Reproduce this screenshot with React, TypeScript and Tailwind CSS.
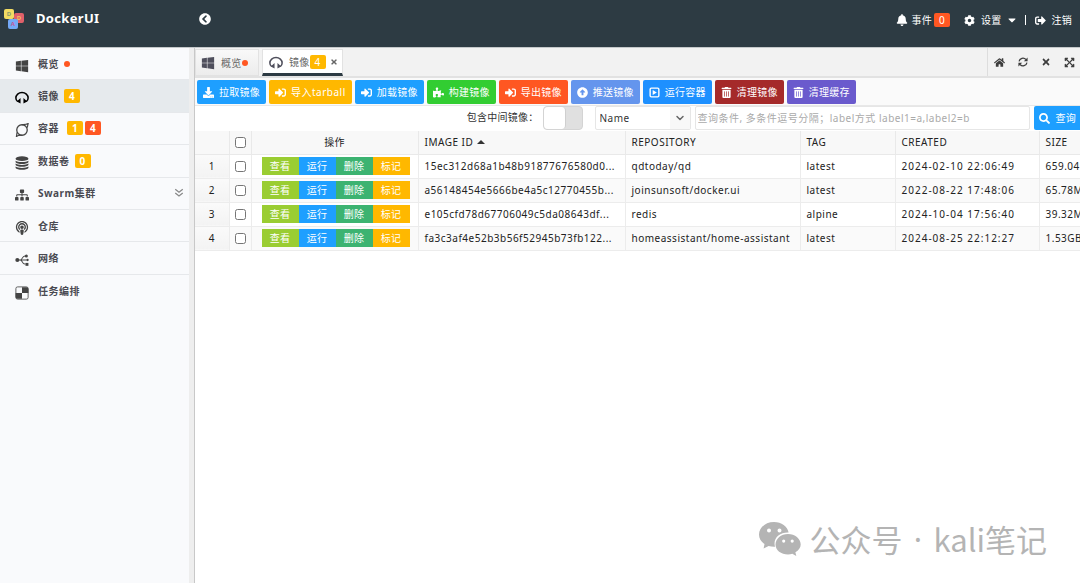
import React from 'react';
import {
  FaArrowAltCircleUp,
  FaBell,
  FaCaretDown,
  FaChevronCircleLeft,
  FaCog,
  FaDownload,
  FaExpandArrowsAlt,
  FaHome,
  FaPodcast,
  FaPuzzlePiece,
  FaSearch,
  FaSignInAlt,
  FaSignOutAlt,
  FaSitemap,
  FaTimes,
  FaTrashAlt,
  FaWindows,
} from 'react-icons/fa';
import { FiChevronDown } from 'react-icons/fi';
import { clsx } from 'clsx';

type IconProps = { className?: string };

const HeadphoneIcon = ({ className }: IconProps) => (
  <svg viewBox="0 0 24 24" className={className} fill="none" stroke="currentColor">
    <path d="M4.500 18C2.500 16.500 1.500 14.500 1.500 12a10.500 9.500 0 0 1 21 0c0 2.500-1 4.500-3 6" strokeWidth="2.600" />
    <path d="M9.500 12v9.500L3 18zM14.500 12v9.500L21 18z" fill="currentColor" stroke="none" />
  </svg>
);

const ContainerIcon = ({ className }: IconProps) => (
  <svg viewBox="0 0 24 24" className={className} fill="none" stroke="currentColor" strokeWidth="2.200">
    <ellipse cx="12" cy="12" rx="9" ry="9" />
    <path d="M12 3c3-.2 7 .2 10.500-2l-1.500 7M12 21c-3 .2-6-.2-9.500 2l1-7" strokeWidth="2" />
  </svg>
);

const DatabaseIcon = ({ className }: IconProps) => (
  <svg viewBox="0 0 24 24" className={className} fill="currentColor">
    <ellipse cx="12" cy="4.500" rx="11" ry="4" />
    <path d="M1 8c3 3.200 19 3.200 22 0v2.500c-2 4-20 4-22 0zM1 13c3 3.200 19 3.200 22 0v2.500c-2 4-20 4-22 0zM1 18c3 3.200 19 3.200 22 0v2.500c-2 4-20 4-22 0z" />
  </svg>
);

const NetworkIcon = ({ className }: IconProps) => (
  <svg viewBox="0 0 24 24" className={className} fill="none" stroke="currentColor" strokeWidth="1.800">
    <circle cx="4" cy="12" r="3.500" fill="currentColor" stroke="none" />
    <path d="M4 12h16M9 12c4 0 3-7 8-7h1M9 12c4 0 3 7 8 7h1" />
    <circle cx="19.500" cy="5" r="2.600" fill="currentColor" stroke="none" />
    <circle cx="21.500" cy="12" r="2" fill="currentColor" stroke="none" />
    <rect x="18" y="17" width="5" height="5" fill="currentColor" stroke="none" />
  </svg>
);

const BoardIcon = ({ className }: IconProps) => (
  <svg viewBox="0 0 24 24" className={className} fill="none" stroke="currentColor">
    <rect x="1.500" y="1.500" width="21" height="21" rx="3" strokeWidth="1.400" />
    <path d="M12 2h8a3 3 0 0 1 3 3v7H12zM1 12h11v10H4a3 3 0 0 1-3-3z" fill="currentColor" stroke="none" />
  </svg>
);

const RefreshIcon = ({ className }: IconProps) => (
  <svg viewBox="0 0 24 24" className={className} fill="none" stroke="currentColor" strokeWidth="3">
    <path d="M2.500 10.500A9.500 9.500 0 0 1 19 6M21.500 13.500A9.500 9.500 0 0 1 5 18" />
    <path d="M23 1v9h-9zM1 23v-9h9z" fill="currentColor" stroke="none" />
  </svg>
);

const PlayBoxIcon = ({ className }: IconProps) => (
  <svg viewBox="0 0 24 24" className={className} fill="none" stroke="currentColor">
    <rect x="2.500" y="2.500" width="19" height="19" rx="2.500" strokeWidth="3" />
    <path d="M8 6.500v11l9-5.500z" fill="currentColor" stroke="none" />
  </svg>
);

const DoubleChevronIcon = ({ className }: IconProps) => (
  <svg viewBox="0 0 24 24" className={className} fill="none" stroke="currentColor" strokeWidth="3">
    <path d="M3 3l9 7 9-7M3 12l9 7 9-7" />
  </svg>
);

const WechatIcon = ({ className }: IconProps) => (
  <svg viewBox="0 0 42 34" className={className} fill="currentColor">
    <path
      fillRule="evenodd"
      d="M15 0C6.500 0 0 5.600 0 12.500c0 4 2.100 7.300 5.500 9.600L4.600 26.500l5-2.600c2 .6 4 .9 6.400.8-2.400-8.700 5-14.700 13.600-14.200C28.500 4.500 22.500 0 15 0zM10 6.500a2 2 0 1 1 0 4 2 2 0 0 1 0-4zM20.500 6.500a2 2 0 1 1 0 4 2 2 0 0 1 0-4z"
    />
    <path
      fillRule="evenodd"
      d="M29 12c-7 0-12.500 4.700-12.500 10.500S22 32.500 29 32.500c1.500 0 3-.2 4.300-.7l4 2.200-.9-3.700c3.300-1.900 5.300-4.700 5.300-7.800C41.700 16.700 36 12 29 12zM24.700 17.500a1.600 1.600 0 1 1 0 3.200 1.600 1.600 0 0 1 0-3.200zM33.200 17.500a1.600 1.600 0 1 1 0 3.200 1.600 1.600 0 0 1 0-3.200z"
    />
  </svg>
);

const Logo = () => (
  <div className="relative h-6 w-5 text-[6px] leading-none font-bold" aria-hidden="true">
    <span className="absolute top-1 left-2.5 flex size-2.5 items-center justify-center rounded-xs bg-[#e0606a] text-[#f6c15a]">D</span>
    <span className="absolute top-0 left-0 flex size-2.5 items-center justify-center rounded-xs bg-[#f3dc62] text-[#8a9a6a]">D</span>
    <span className="absolute top-2.5 left-1 flex size-2.5 items-center justify-center rounded-xs bg-[#74a9f7] text-[#c05a9a]">A</span>
  </div>
);

const Badge = ({ value, color }: { value: number; color: string }) => (
  <span className={clsx('flex h-[14px] w-4 items-center justify-center rounded-xs text-[10px] text-white', color)}>{value}</span>
);

interface MenuItem {
  label: string;
  icon: React.ComponentType<IconProps>;
  active?: boolean;
  dot?: boolean;
  expandable?: boolean;
  badges?: { value: number; color: string }[];
}

const MENU: MenuItem[] = [
  { label: '概览', icon: FaWindows, dot: true },
  { label: '镜像', icon: HeadphoneIcon, active: true, badges: [{ value: 4, color: 'bg-[#ffb800]' }] },
  {
    label: '容器',
    icon: ContainerIcon,
    badges: [
      { value: 1, color: 'bg-[#ffb800]' },
      { value: 4, color: 'bg-[#ff5722]' },
    ],
  },
  { label: '数据卷', icon: DatabaseIcon, badges: [{ value: 0, color: 'bg-[#ffb800]' }] },
  { label: 'Swarm集群', icon: FaSitemap, expandable: true },
  { label: '仓库', icon: FaPodcast },
  { label: '网络', icon: NetworkIcon },
  { label: '任务编排', icon: BoardIcon },
];

const TOOLS = [
  { label: '拉取镜像', icon: FaDownload, color: 'bg-[#1e9fff]' },
  { label: '导入tarball', icon: FaSignInAlt, color: 'bg-[#ffb800] tracking-wider' },
  { label: '加载镜像', icon: FaSignInAlt, color: 'bg-[#1e9fff]' },
  { label: '构建镜像', icon: FaPuzzlePiece, color: 'bg-[#32cd32]' },
  { label: '导出镜像', icon: FaSignInAlt, color: 'bg-[#ff5722]' },
  { label: '推送镜像', icon: FaArrowAltCircleUp, color: 'bg-[#6495ed]' },
  { label: '运行容器', icon: PlayBoxIcon, color: 'bg-[#1e90ff]' },
  { label: '清理镜像', icon: FaTrashAlt, color: 'bg-[#a52a2a]' },
  { label: '清理缓存', icon: FaTrashAlt, color: 'bg-[#6a5acd]' },
];

const ACTIONS = [
  { label: '查看', color: 'bg-[#9acd32]' },
  { label: '运行', color: 'bg-[#1e9fff]' },
  { label: '删除', color: 'bg-[#3cb371]' },
  { label: '标记', color: 'bg-[#ffb800]' },
];

const IMAGES = [
  { id: '15ec312d68a1b48b91877676580d0...', repo: 'qdtoday/qd', tag: 'latest', created: '2024-02-10 22:06:49', size: '659.04MB' },
  { id: 'a56148454e5666be4a5c12770455b...', repo: 'joinsunsoft/docker.ui', tag: 'latest', created: '2022-08-22 17:48:06', size: '65.78MB' },
  { id: 'e105cfd78d67706049c5da08643df...', repo: 'redis', tag: 'alpine', created: '2024-10-04 17:56:40', size: '39.32MB' },
  { id: 'fa3c3af4e52b3b56f52945b73fb122...', repo: 'homeassistant/home-assistant', tag: 'latest', created: '2024-08-25 22:12:27', size: '1.53GB' },
];

const Header = () => (
  <header className="flex h-12 items-start justify-between border-b border-[#c4c8ca] bg-[#2d3b43] text-white">
    <div className="flex items-start pt-[9px] pl-1">
      <Logo />
      <h1 className="ml-3 w-[163px] text-[13px] leading-[18px] font-bold tracking-wide">DockerUI</h1>
      <button type="button" aria-label="收起菜单" className="mt-1">
        <FaChevronCircleLeft className="size-3" />
      </button>
    </div>
    <nav className="flex h-10 items-center pr-2">
      <button type="button" className="flex items-center">
        <FaBell className="mr-1 size-3" />
        事件
        <span className="ml-0.5">
          <Badge value={0} color="bg-[#ff5722]" />
        </span>
      </button>
      <button type="button" className="ml-[14px] flex items-center">
        <FaCog className="mr-1.5 size-[11px]" />
        设置
        <FaCaretDown className="ml-1 size-3" />
      </button>
      <span className="mx-[7px] h-[10px] w-px bg-white" />
      <a href="#logout" className="ml-0.5 flex items-center">
        <FaSignOutAlt className="mr-1.5 size-[11px]" />
        注销
      </a>
    </nav>
  </header>
);

const Sidebar = () => (
  <aside className="w-[195px] shrink-0 border-r border-[#c8c8c8] bg-[#eeeeee] pr-[5px]">
    <div className="h-full bg-[#f9fafc]">
      <ul className="grid h-[259px] grid-rows-8">
        {MENU.map(({ label, icon: Icon, active, dot, expandable, badges }) => (
          <li key={label} className={clsx('border-b border-[#e6e8eb] last:border-b-0', active && 'bg-[#e6eaed]')}>
            <a href="#menu" className="flex h-full items-center pr-[5px] pl-[15px] font-bold tracking-wider text-[#4a4a52]">
              <Icon className={clsx('mt-1 mr-[9px] size-[14px] shrink-0', active ? 'text-black' : 'text-[#444444]')} />
              {label}
              {dot && <span className="ml-[5px] size-1.5 rounded-full bg-[#ff5722]" />}
              {badges && (
                <span className={clsx('flex gap-0.5', badges.length > 1 ? 'ml-2' : 'ml-[5px]')}>
                  {badges.map((b) => (
                    <Badge key={b.color} value={b.value} color={b.color} />
                  ))}
                </span>
              )}
              {expandable && <DoubleChevronIcon className="ml-auto size-[10px] text-[#888888]" />}
            </a>
          </li>
        ))}
      </ul>
    </div>
  </aside>
);

const TabBar = () => (
  <div className="flex h-[30px] justify-between border-b-2 border-[#e2e2e2] bg-[#f2f2f2]">
    <div className="flex gap-[3px] pt-px">
      <button type="button" className="flex w-16 items-center border border-[#e2e2e2] bg-linear-to-b from-[#f9f9f9] to-[#ececec] pl-[5px] text-[#666666]">
        <FaWindows className="mr-1.5 size-[14px] shrink-0 text-[#4f4f5c]" />
        概览
        <span className="size-1.5 shrink-0 rounded-full bg-[#ff5722]" />
      </button>
      <div className="flex w-[81px] items-center border border-b-3 border-[#e2e2e2] border-b-[#2d3b43] bg-white pl-1.5 text-[#666666]">
        <HeadphoneIcon className="mt-0.5 mr-1.5 size-[14px] shrink-0 text-[#4f4f5c]" />
        镜像
        <Badge value={4} color="bg-[#ffb800]" />
        <button type="button" aria-label="关闭" className="ml-1">
          <FaTimes className="size-2" />
        </button>
      </div>
    </div>
    <div className="flex items-center gap-[13px] border-l border-[#dddddd] pr-[5px] pl-1.5 text-[#3d3d3d]">
      <button type="button" aria-label="主页">
        <FaHome className="size-[11px]" />
      </button>
      <button type="button" aria-label="刷新">
        <RefreshIcon className="size-[10px]" />
      </button>
      <button type="button" aria-label="关闭全部">
        <FaTimes className="size-[10px]" />
      </button>
      <button type="button" aria-label="全屏">
        <FaExpandArrowsAlt className="size-[11px]" />
      </button>
    </div>
  </div>
);

const Filters = () => (
  <form className="flex h-[25px] items-start justify-end gap-1">
    <label htmlFor="intermediate" className="leading-[22px] text-[#333333]">
      包含中间镜像：
    </label>
    <input
      id="intermediate"
      type="checkbox"
      className="mr-2 h-6 w-10 appearance-none rounded-sm border border-[#d4d4d4] bg-[#e0e0e0] before:block before:h-[22px] before:w-[22px] before:rounded-sm before:border-r before:border-[#cfcfcf] before:bg-white"
    />
    <div className="relative">
      <select
        aria-label="查询字段"
        defaultValue="Name"
        className="h-6 w-24 appearance-none rounded-xs border border-[#e6e6e6] bg-white pl-1 tracking-wider text-[#333333]"
      >
        <option>Name</option>
        <option>Label</option>
      </select>
      <span className="pointer-events-none absolute top-px right-px flex h-[22px] w-5 items-center justify-center bg-[#f8f8f8]">
        <FiChevronDown className="size-3 text-[#666666]" strokeWidth={3} />
      </span>
    </div>
    <input
      type="text"
      aria-label="查询条件"
      placeholder="查询条件, 多条件逗号分隔；label方式 label1=a,label2=b"
      className="h-6 w-[335px] rounded-xs border border-[#e6e6e6] bg-white px-0.5 tracking-wider placeholder:text-[#aaaaaa]"
    />
    <button type="button" className="flex h-6 shrink-0 items-center rounded-l-xs bg-[#1e9fff] pr-1 pl-[5px] text-white">
      <FaSearch className="mr-1.5 size-[11px]" />
      查询
    </button>
  </form>
);

const ImageTable = () => (
  <div className="overflow-hidden">
    <table className="w-[945px] min-w-full table-fixed border-collapse text-left tracking-wider text-[#222222]">
      <colgroup>
        <col className="w-[34px]" />
        <col className="w-[22px]" />
        <col className="w-[167px]" />
        <col className="w-[207px]" />
        <col className="w-[175px]" />
        <col className="w-[95px]" />
        <col className="w-[144px]" />
        <col className="w-[101px]" />
      </colgroup>
      <thead>
        <tr className="h-[23px] bg-[#f8f8f8] *:border-r *:border-b *:border-[#e9e9e9] *:p-0 *:font-normal">
          <th />
          <th>
            <input type="checkbox" aria-label="全选" className="mx-auto block size-[11px]" />
          </th>
          <th className="text-center tracking-wide">操作</th>
          <th>
            <span className="flex items-center gap-1 pl-1.5">
              IMAGE ID
              <svg viewBox="0 0 8 4" className="h-1 w-2">
                <path d="M0 4l4-4 4 4z" fill="#333333" />
              </svg>
            </span>
          </th>
          <th><span className="pl-1.5">REPOSITORY</span></th>
          <th><span className="pl-1.5">TAG</span></th>
          <th><span className="pl-1.5">CREATED</span></th>
          <th><span className="pl-1.5">SIZE</span></th>
        </tr>
      </thead>
      <tbody>
        {IMAGES.map((image, index) => (
          <tr key={image.id} className="h-6 whitespace-nowrap *:border-r *:border-b *:border-[#ececec] *:p-0 even:bg-[#fafafa]">
            <td className="bg-linear-to-b from-[#fafafa] to-[#f3f3f3] text-center">{index + 1}</td>
            <td>
              <input type="checkbox" aria-label={`选择 ${image.repo}`} className="mx-auto block size-[11px]" />
            </td>
            <td>
              <div className="flex justify-center pl-0.5 tracking-wide">
                {ACTIONS.map((action) => (
                  <button
                    key={action.label}
                    type="button"
                    className={clsx('flex h-[18px] w-[37px] items-center justify-center text-white', action.color)}
                  >
                    {action.label}
                  </button>
                ))}
              </div>
            </td>
            <td><span className="pl-1.5">{image.id}</span></td>
            <td><span className="pl-1.5">{image.repo}</span></td>
            <td><span className="pl-1.5">{image.tag}</span></td>
            <td><span className="pl-1.5 tracking-widest">{image.created}</span></td>
            <td><span className="pl-1.5">{image.size}</span></td>
          </tr>
        ))}
      </tbody>
    </table>
  </div>
);

export default function App() {
  return (
    <div className="relative flex min-h-screen flex-col overflow-hidden bg-white font-['Noto_Sans','Noto_Sans_CJK_SC',sans-serif] text-[10px] leading-4 tracking-wide">
      <Header />
      <div className="flex flex-1">
        <Sidebar />
        <main className="min-w-0 flex-1">
          <TabBar />
          <div className="flex h-[28px] items-start gap-[3px] border-b border-[#e8e8e8] bg-[#fafafa] pt-0.5 pl-0.5">
            {TOOLS.map(({ label, icon: Icon, color }) => (
              <button
                key={label}
                type="button"
                className={clsx('flex h-6 shrink-0 items-center gap-[5px] rounded-xs px-1.5 text-white', color)}
              >
                <Icon className="size-[11px]" />
                {label}
              </button>
            ))}
          </div>
          <Filters />
          <ImageTable />
        </main>
      </div>
      <div className="pointer-events-none absolute right-[33px] bottom-[21px] flex items-center font-['Noto_Sans_CJK_SC',sans-serif] text-[31px] leading-[46px] font-normal tracking-normal text-[#b4b4b4]">
        <WechatIcon className="mr-2 h-[34px] w-[42px]" />
        <span>公众号</span>
        <span className="w-[31px] text-center font-['Noto_Sans',sans-serif]">·</span>
        <span>kali笔记</span>
      </div>
    </div>
  );
}
